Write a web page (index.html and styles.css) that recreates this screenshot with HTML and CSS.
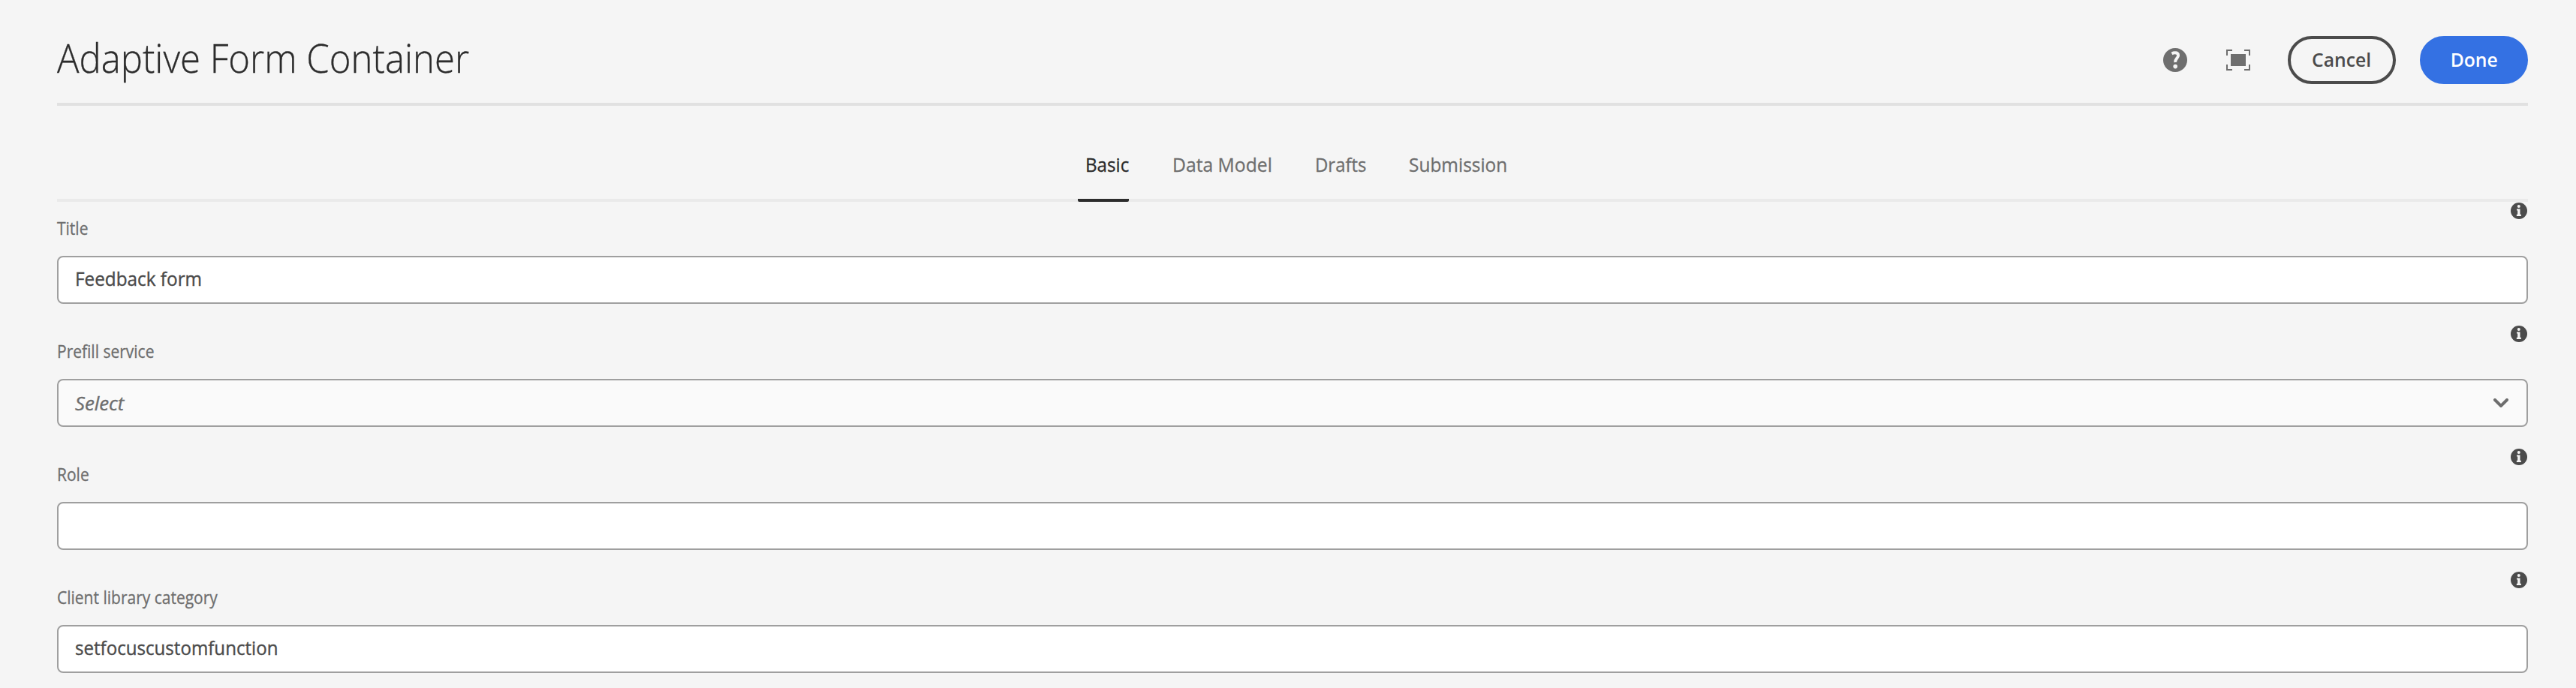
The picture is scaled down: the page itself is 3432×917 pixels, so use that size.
FILE: index.html
```html
<!DOCTYPE html>
<html lang="en">
<head>
<meta charset="utf-8">
<title>Adaptive Form Container</title>
<link rel="stylesheet" href="styles.css">
</head>
<body>
<svg class="sprite" aria-hidden="true">
  <symbol id="info" viewBox="0 0 22 22">
    <circle cx="11" cy="11" r="11" fill="#4b4b4b"/>
    <circle cx="10.8" cy="5.1" r="2" fill="#f5f5f5"/>
    <path d="M8.6 8.4h3.9v7.4h.9a.6.6 0 0 1 .6.6v.9a.6.6 0 0 1-.6.6H8.4a.6.6 0 0 1-.6-.6v-.9a.6.6 0 0 1 .6-.6h.8v-5.3h-.6a.6.6 0 0 1-.6-.6V9a.6.6 0 0 1 .6-.6z" fill="#f5f5f5"/>
  </symbol>
</svg>
<main class="dialog">
  <header class="header">
    <h1 class="heading">Adaptive Form Container</h1>
    <div class="actions">
      <svg class="icon help" viewBox="0 0 32 32">
        <circle cx="16" cy="16" r="16" fill="#6e6e6e"/>
        <path d="M11.5 7.4Q13.6 6.3 15.8 6.3C18.6 6.3 20.1 7.7 20.1 9.9C20.1 13.5 15.6 14.2 16.2 19" fill="none" stroke="#f5f5f5" stroke-width="3.9"/>
        <circle cx="16.2" cy="24.6" r="2.8" fill="#f5f5f5"/>
      </svg>
      <svg class="icon" viewBox="0 0 32 32">
        <path d="M1 10V3h7M24 3h7v7M31 22v7h-7M8 29H1v-7" fill="none" stroke="#6e6e6e" stroke-width="2"/>
        <path d="M6 8h20v16H6z" fill="#6e6e6e"/>
      </svg>
      <button class="btn btn-cancel"><span>Cancel</span></button>
      <button class="btn btn-done"><span>Done</span></button>
    </div>
  </header>
  <nav class="tabs">
    <div class="tablist">
      <a class="tab selected"><span class="t-basic">Basic</span></a>
      <a class="tab"><span class="t-model">Data Model</span></a>
      <a class="tab"><span class="t-drafts">Drafts</span></a>
      <a class="tab"><span class="t-submission">Submission</span></a>
    </div>
  </nav>
  <section class="fields">
    <div class="field">
      <div class="field-top"><label class="label">Title</label><svg class="info"><use href="#info"/></svg></div>
      <div class="input"><span class="value v-title">Feedback form</span></div>
    </div>
    <div class="field">
      <div class="field-top"><label class="label">Prefill service</label><svg class="info"><use href="#info"/></svg></div>
      <div class="input select"><span class="value v-select">Select</span>
        <svg class="chevron" viewBox="0 0 20 12"><path d="M2 2l8 8 8-8" fill="none" stroke="#6e6e6e" stroke-width="4" stroke-linecap="round"/></svg>
      </div>
    </div>
    <div class="field">
      <div class="field-top"><label class="label">Role</label><svg class="info"><use href="#info"/></svg></div>
      <div class="input"></div>
    </div>
    <div class="field">
      <div class="field-top"><label class="label">Client library category</label><svg class="info"><use href="#info"/></svg></div>
      <div class="input"><span class="value v-clientlib">setfocuscustomfunction</span></div>
    </div>
  </section>
</main>
</body>
</html>
```
FILE: styles.css
```css
* { box-sizing: border-box; }
body {
  margin: 0;
  background: #f5f5f5;
  color: #4b4b4b;
  font-family: "Open Sans", "Noto Sans", sans-serif;
  font-size: 26px;
  height: 917px;
  overflow: hidden;
}
.sprite { display: none; }
.dialog { padding: 0 64px 0 76px; }
.header {
  height: 141px;
  padding-top: 17px;
  border-bottom: 4px solid #e1e1e1;
  display: flex;
  align-items: flex-start;
  justify-content: space-between;
}
.heading {
  margin: 0;
  font-size: 53px;
  line-height: 120px;
  font-weight: 300;
  color: #2c2c2c;
  -webkit-text-stroke: .3px #2c2c2c;
  transform: scaleX(.926);
  transform-origin: left;
}
.actions { display: flex; align-items: center; margin-top: 31px; }
.icon { width: 32px; height: 32px; margin-right: 50px; }
.icon.help { margin-right: 52px; }
.btn {
  width: 144px;
  height: 64px;
  padding: 0 0 2px;
  border: 4px solid #4b4b4b;
  border-radius: 32px;
  background: transparent;
  color: #4b4b4b;
  font: 600 26px/54px "Open Sans", sans-serif;
}
.btn span { display: inline-block; transform: scaleX(.95); }
.btn-done {
  margin-left: 32px;
  background: #3471e3;
  border-color: #3471e3;
  color: #fff;
}
.tabs {
  height: 128px;
  border-bottom: 4px solid #eaeaea;
  display: flex;
  justify-content: center;
}
.tablist {
  width: 572px;
  height: 128px;
  display: grid;
  grid-template-columns: 116px 190px 125px 141px;
}
.tab {
  padding: 58px 0 0 10px;
  line-height: 40px;
  color: #6e6e6e;
  white-space: nowrap;
}
.tab.selected {
  width: 68px;
  color: #2c2c2c;
  background: linear-gradient(#2c2c2c, #2c2c2c) bottom / 100% 4px no-repeat;
  border-radius: 2px;
}
.tab span {
  display: inline-block;
  transform-origin: left;
  -webkit-text-stroke: .3px currentColor;
}
.t-basic { transform: scaleX(.93); }
.t-model { transform: scaleX(.95); }
.t-drafts { transform: scaleX(.92); }
.t-submission { transform: scaleX(.94); }
.field { height: 164px; }
.field-top {
  height: 72px;
  display: flex;
  justify-content: space-between;
}
.label {
  font-size: 23px;
  line-height: 40px;
  padding-top: 15px;
  color: #6e6e6e;
  -webkit-text-stroke: .3px currentColor;
  transform: scaleX(.913);
  transform-origin: left;
}
.info { width: 22px; height: 22px; margin: 1px 1px 0 0; }
.input {
  height: 64px;
  padding: 0 24px 4px 22px;
  border: 2px solid #9f9f9f;
  border-radius: 8px;
  background: #fff;
  display: flex;
  align-items: center;
  justify-content: space-between;
}
.select { background: #fafafa; color: #6e6e6e; padding-bottom: 0; }
.value { transform-origin: left; -webkit-text-stroke: .4px currentColor; }
.v-title { transform: scaleX(.935); }
.v-select { font-style: italic; transform: scaleX(.99); }
.v-clientlib { transform: scaleX(.927); }
.chevron { width: 20px; height: 12px; }
```
